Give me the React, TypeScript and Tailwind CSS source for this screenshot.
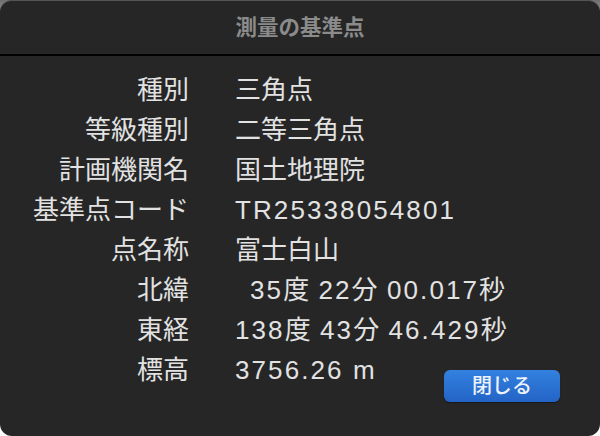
import type { ReactNode } from 'react'

const FONT = "font-['Liberation_Sans','Noto_Sans_CJK_JP',sans-serif]"

interface Row {
  label: string
  value: string
  indent?: boolean
}

const ROWS: Row[] = [
  { label: '種別', value: '三角点' },
  { label: '等級種別', value: '二等三角点' },
  { label: '計画機関名', value: '国土地理院' },
  { label: '基準点コード', value: 'TR25338054801' },
  { label: '点名称', value: '富士白山' },
  { label: '北緯', value: '35度 22分 00.017秒', indent: true },
  { label: '東経', value: '138度 43分 46.429秒' },
  { label: '標高', value: '3756.26 m' },
]

// latin runs get a bit of tracking so they sit as wide as the mac font does
function spaced(text: string): ReactNode[] {
  const parts = text.match(/[\x20-\x7e]+|[^\x20-\x7e]+/g) ?? []
  return parts.map((p, i) =>
    /^[\x20-\x7e]+$/.test(p) ? (
      <span key={i} className="tracking-[2.1px] whitespace-pre">
        {p}
      </span>
    ) : (
      <span key={i}>{p}</span>
    ),
  )
}

export default function App() {
  return (
    <div className={`h-[436px] w-[600px] bg-linear-to-b from-[#6e6e6e] to-white to-10% ${FONT}`}>
      <div className="flex h-full w-full flex-col overflow-hidden rounded-[12px] border-t border-[#555] bg-[#262626]">
        {/* title bar */}
        <div className="flex h-[55px] items-center justify-center border-b-2 border-black pt-[1px]">
          <h1 className="text-[21.5px] font-bold text-[#8b8b8b]">測量の基準点</h1>
        </div>

        {/* fields */}
        <div className="grid grid-cols-[189px_1fr] gap-x-[46px] pt-[14px] text-[26px] leading-[40px] text-[#e2e2e2]">
          {ROWS.map((row, i) => {
            const last = i === ROWS.length - 1
            return [
              <div key={row.label} className="text-right">
                {row.label}
              </div>,
              <div
                key={row.label + '-v'}
                className={`flex items-start justify-between pr-[40px] ${row.indent ? 'pl-[15px]' : ''}`}
              >
                <span>{spaced(row.value)}</span>
                {last && (
                  <button className="mt-[20px] h-[32px] w-[116px] rounded-[6px] bg-linear-to-b from-[#3381e0] to-[#2364c6] text-[20px] leading-[32px] font-medium text-[#eef3fb] shadow-[0_1px_1px_rgba(0,0,0,0.4)]">
                    閉じる
                  </button>
                )}
              </div>,
            ]
          })}
        </div>
      </div>
    </div>
  )
}
